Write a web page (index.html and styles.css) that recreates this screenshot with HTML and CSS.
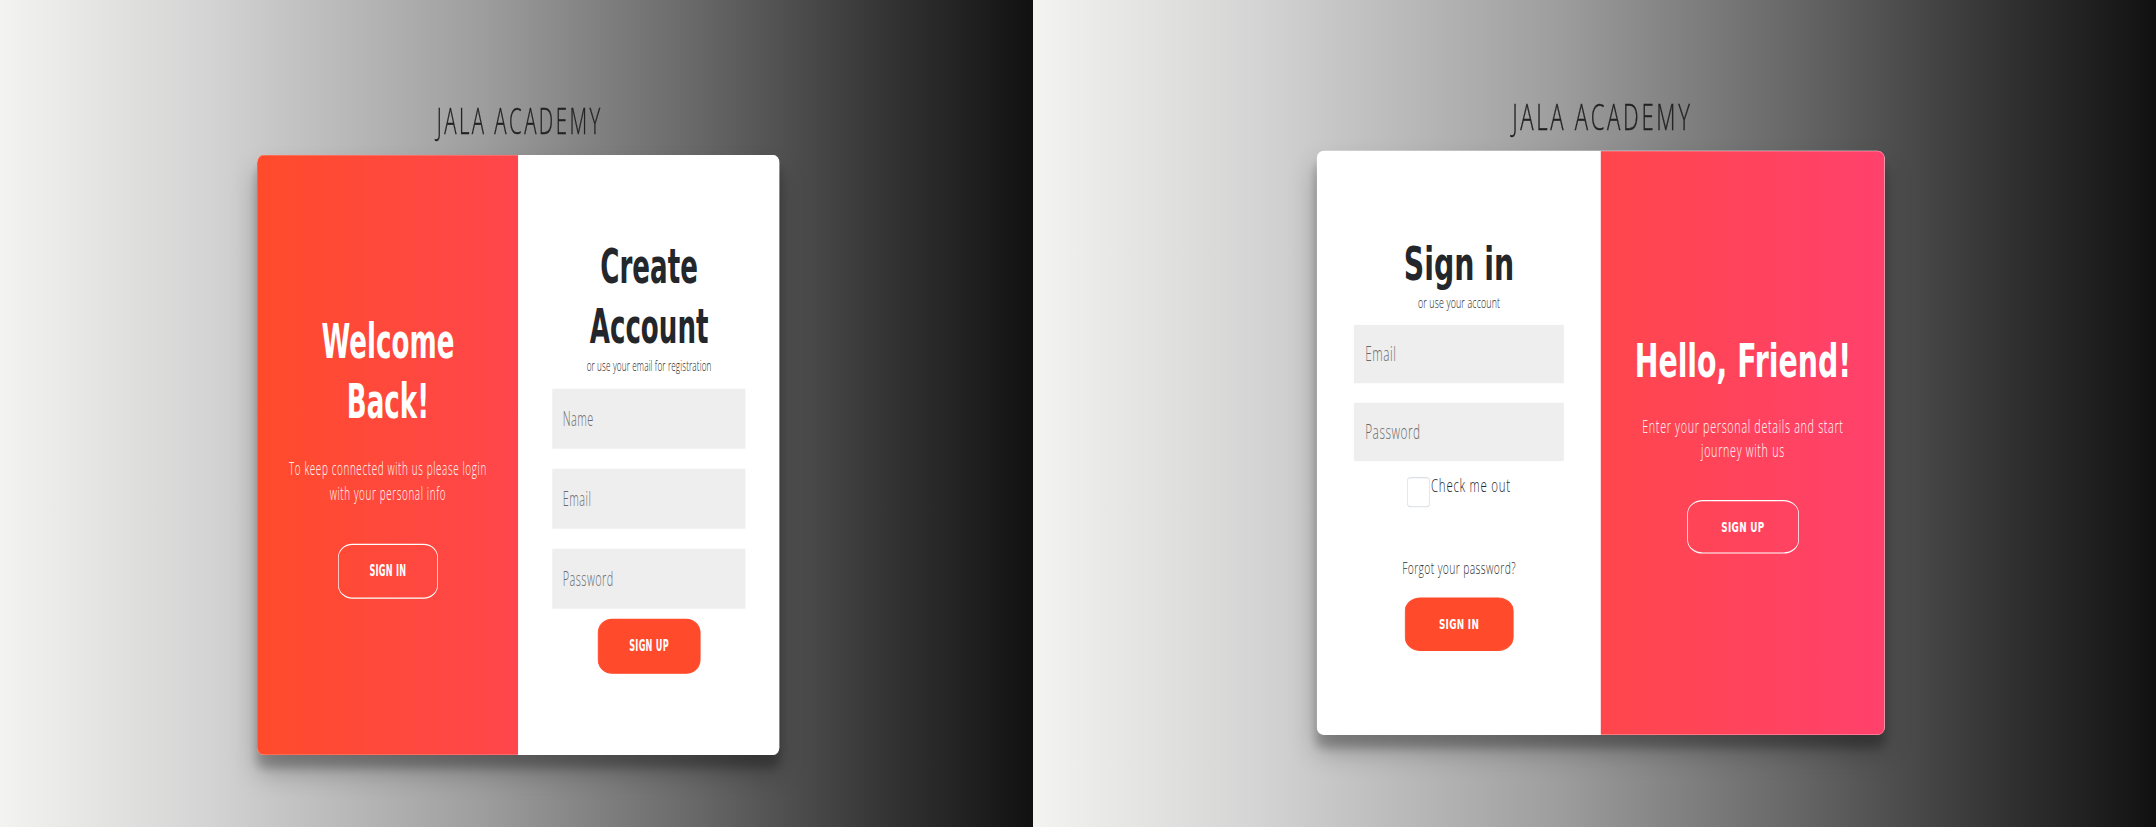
FILE: index.html
```html
<!DOCTYPE html>
<html lang="en">
<head>
<meta charset="utf-8">
<title>JALA ACADEMY</title>
<link rel="stylesheet" href="styles.css">
</head>
<body>
<div class="shot shot-left">
  <div class="page page-left">
    <h2 class="brand">JALA ACADEMY</h2>
    <div class="card">
      <div class="panel overlay overlay-left">
        <h1 class="title">Welcome<br>Back!</h1>
        <p class="lead">To keep connected with us please login<br>with your personal info</p>
        <button class="btn btn-ghost" type="button">Sign In</button>
      </div>
      <form class="panel form">
        <h1 class="title">Create<br>Account</h1>
        <span class="hint">or use your email for registration</span>
        <input class="field" type="text" placeholder="Name">
        <input class="field" type="email" placeholder="Email">
        <input class="field" type="password" placeholder="Password">
        <button class="btn btn-solid" type="button">Sign Up</button>
      </form>
    </div>
  </div>
</div>
<div class="shot shot-right">
  <div class="page page-right">
    <h2 class="brand">JALA ACADEMY</h2>
    <div class="card">
      <form class="panel form">
        <h1 class="title">Sign in</h1>
        <span class="hint">or use your account</span>
        <input class="field" type="email" placeholder="Email">
        <input class="field" type="password" placeholder="Password">
        <label class="check-row"><input class="check-box" type="checkbox"><span class="check-label">Check me out</span></label>
        <a class="forgot" href="#">Forgot your password?</a>
        <button class="btn btn-solid" type="button">Sign In</button>
      </form>
      <div class="panel overlay overlay-right">
        <h1 class="title nowrap">Hello, Friend!</h1>
        <p class="lead">Enter your personal details and start<br>journey with us</p>
        <button class="btn btn-ghost" type="button">Sign Up</button>
      </div>
    </div>
  </div>
</div>
</body>
</html>
```

FILE: styles.css
```css
* {
  box-sizing: border-box;
}

html,
body {
  margin: 0;
  padding: 0;
}

body {
  width: 2156px;
  height: 827px;
  overflow: hidden;
  display: flex;
  font-family: "Open Sans", "Liberation Sans", sans-serif;
}

.shot {
  flex: none;
  height: 827px;
  overflow: hidden;
  background: linear-gradient(to right, #f3f3f1 0%, #d4d4d4 20%, #9e9e9e 46.5%, #6a6a6a 66.6%, #323232 86.5%, #111111 100%);
}

.shot-left {
  width: 1033px;
}

.shot-right {
  width: 1123px;
}

/* each half is a squeezed screenshot of the same 1519px wide page */
.page {
  width: 1519px;
  display: flex;
  flex-direction: column;
  align-items: center;
  padding-top: 80.6px;
  transform-origin: 0 0;
}

.page-left {
  padding-left: 5.8px;
  transform: scale(0.6801, 1.25);
}

.page-right {
  padding-left: 17.6px;
  transform: scale(0.7393, 1.2167);
}

.brand {
  margin: 0 0 13.4px;
  padding-left: 3.6px;
  font-family: "Open Sans", sans-serif;
  font-weight: 300;
  font-size: 30px;
  line-height: 30px;
  letter-spacing: 3.6px;
  color: #222222;
  -webkit-text-stroke: 0.3px #222222;
}

.card {
  width: 768px;
  height: 480px;
  display: flex;
  overflow: hidden;
  background: #ffffff;
  border-radius: 10px / 6px;
  box-shadow: 0 14px 28px rgba(0, 0, 0, 0.25), 0 10px 10px rgba(0, 0, 0, 0.22);
}

.panel {
  width: 384px;
  height: 100%;
  flex: none;
  display: flex;
  flex-direction: column;
  align-items: center;
  justify-content: center;
  text-align: center;
  margin: 0;
}

.overlay {
  padding: 0 40px;
  color: #ffffff;
}

.overlay-left {
  background: linear-gradient(to right, #ff4b2b, #ff464c);
}

.overlay-right {
  background: linear-gradient(to right, #ff464c, #ff416c);
}

.form {
  padding: 0 50px;
  background: #ffffff;
}

.title {
  margin: 0;
  font-family: "DejaVu Sans", "Liberation Sans", sans-serif;
  font-weight: 700;
  font-size: 38.4px;
  line-height: 48px;
  color: #23262a;
}

.overlay .title {
  color: #ffffff;
}

.nowrap {
  white-space: nowrap;
}

.lead {
  margin: 20px 0 30px;
  font-weight: 300;
  font-size: 14.5px;
  line-height: 20px;
  letter-spacing: 0.95px;
  white-space: nowrap;
}

.hint {
  display: block;
  margin-bottom: 2px;
  font-weight: 300;
  font-size: 12px;
  line-height: 16.3px;
  letter-spacing: 0.2px;
  color: #222222;
}

.field {
  display: block;
  width: 100%;
  height: 48px;
  margin: 8px 0;
  padding: 0 15px;
  border: none;
  outline: none;
  background: #eeeeee;
  font-family: "Open Sans", sans-serif;
  font-weight: 300;
  font-size: 16px;
  letter-spacing: 0.7px;
  color: #333333;
}

.field::placeholder {
  color: #6b6b6b;
}

.check-row {
  display: flex;
  align-items: flex-start;
  gap: 1px;
  margin-bottom: 25px;
}

.check-box {
  appearance: none;
  -webkit-appearance: none;
  width: 31px;
  height: 25.5px;
  margin: 4.3px 0 0;
  border: 1px solid #dcdfe4;
  border-radius: 6px / 3px;
  background: #ffffff;
}

.check-label {
  font-weight: 300;
  font-size: 15.5px;
  line-height: 22.5px;
  letter-spacing: 1px;
  color: #212529;
}

.forgot {
  display: block;
  margin: 15px 0;
  font-weight: 300;
  font-size: 14px;
  letter-spacing: 0.5px;
  color: #333333;
  text-decoration: none;
}

.btn {
  height: 44px;
  padding: 0 45px;
  border: 1px solid #ff4b2b;
  border-radius: 21px / 11px;
  background: #ff4b2b;
  color: #ffffff;
  font-family: "DejaVu Sans", "Liberation Sans", sans-serif;
  font-weight: 700;
  font-size: 12px;
  letter-spacing: 0.4px;
  text-transform: uppercase;
}

.btn-ghost {
  background: transparent;
  border-color: #ffffff;
}
```
